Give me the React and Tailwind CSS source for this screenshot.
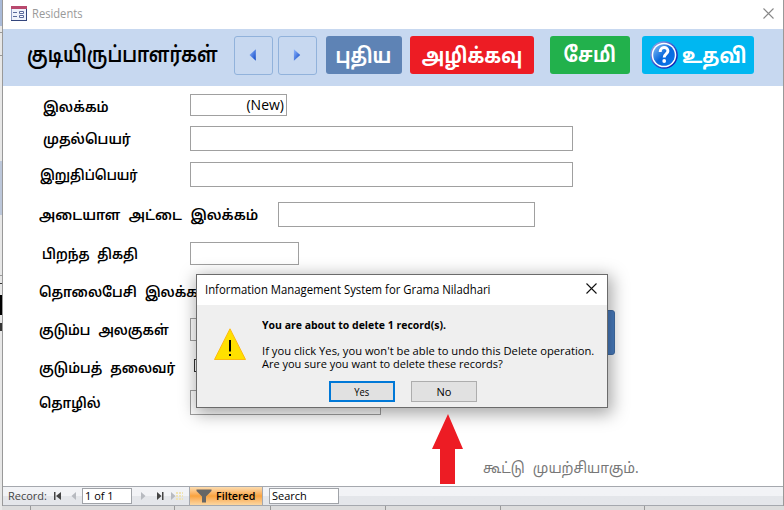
const UI = "font-['Open_Sans','Noto_Sans',sans-serif]";

function T({ children, className = "", origin = "origin-left" }) {
  return <span className={`block shrink-0 whitespace-nowrap ${origin} ${className}`}>{children}</span>;
}

function Row({ label, labelClass = "", textClass = "scale-x-[0.95]", className = "", children }) {
  return (
    <div className={`flex items-center ${className}`}>
      <div className={`shrink-0 pt-[5px] ${labelClass}`}>
        <T className={`text-[14px] font-semibold leading-5 [word-spacing:5px] ${textClass}`}>{label}</T>
      </div>
      {children}
    </div>
  );
}

function Field({ className = "", children }) {
  return <div className={`h-full shrink-0 border border-[#a0a0a0] bg-white ${className}`}>{children}</div>;
}

function NavButton({ flip }) {
  return (
    <div className="flex h-[39px] w-[39px] shrink-0 items-center justify-center rounded-[3px] border border-[#91b2db] pb-px pr-[2px]">
      <svg width="8" height="12" viewBox="0 0 8 12">
        <defs>
          <linearGradient id="nav" x1="0" y1="0" x2="1" y2="1">
            <stop offset="0" stopColor="#8fb6ff" />
            <stop offset="1" stopColor="#0b45c4" />
          </linearGradient>
        </defs>
        <path d={flip ? "M7.2 6 0.9 0.3V11.7Z" : "M0.5 6 6.8 0.3V11.7Z"} fill="url(#nav)" />
      </svg>
    </div>
  );
}

function HelpIcon() {
  return (
    <svg width="28" height="28" viewBox="0 0 28 28" className="shrink-0">
      <defs>
        <linearGradient id="ring" x1="0" y1="0" x2="1" y2="1">
          <stop offset="0" stopColor="#a9b4e6" />
          <stop offset="0.5" stopColor="#3a55cf" />
          <stop offset="1" stopColor="#000aa8" />
        </linearGradient>
        <linearGradient id="disc" x1="0" y1="0" x2="1" y2="1">
          <stop offset="0" stopColor="#8cc4f8" />
          <stop offset="0.5" stopColor="#0868dc" />
          <stop offset="1" stopColor="#0878ee" />
        </linearGradient>
      </defs>
      <circle cx="14" cy="14" r="13.8" fill="url(#ring)" />
      <circle cx="14" cy="14" r="12.3" fill="#fff" />
      <circle cx="14" cy="14" r="10.8" fill="url(#disc)" />
      <path d="M10.2 11C10 5.200 18 5.400 17.900 10C17.800 13.200 14.200 12.600 14.200 16.600" fill="none" stroke="#fff" strokeWidth="3" />
      <circle cx="14.2" cy="20" r="1.9" fill="#fff" />
    </svg>
  );
}

function FormIcon() {
  return (
    <svg width="16" height="15" viewBox="0 0 16 15" className="shrink-0">
      <rect x="0.5" y="0.5" width="15" height="14" fill="#eef2fb" stroke="#8e9cc4" />
      <path d="M0 0H16V3H0Z" fill="#b9496e" />
      <path d="M2 6.5H6M2 10.5H6" stroke="#5a6a9c" />
      <path d="M8.5 5.5H12.5V7.5H8.5ZM8.5 9.5H12.5V11.5H8.5Z" fill="#fff" stroke="#5a6a9c" />
      <path d="M0 14.5H16M15.5 3V15" stroke="#33457c" />
    </svg>
  );
}

function Behind() {
  return (
    <div className="h-[510px] w-[2px] shrink-0 overflow-hidden bg-[#e7e7e7]">
      <div className="h-[26px] bg-[#a9bad8]" />
      <div className="mt-[6px] h-px bg-[#999]" />
      <div className="mt-[22px] h-px bg-[#999]" />
      <div className="mt-[105px] h-[54px] bg-[#bcc7da]" />
      <div className="mt-[60px] h-px bg-[#999]" />
      <div className="mt-[7px] h-px bg-[#333]" />
      <div className="mt-[11px] h-[20px] bg-black" />
      <div className="mt-[8px] h-[8px] bg-[#333]" />
    </div>
  );
}

function Dialog() {
  return (
    <div className={`absolute left-[196px] top-[274px] flex h-[134px] w-[412px] flex-col border border-[#6b6b6b] bg-[#efefef] text-black shadow-[2px_4px_16px_2px_rgba(0,0,0,0.35)] ${UI}`}>
      <div className="flex h-[30px] shrink-0 items-center justify-between bg-white pl-[8px] pr-[10px]">
        <T className="scale-x-[0.945] text-[12px] leading-4">Information Management System for Grama Niladhari</T>
        <svg width="11" height="11" viewBox="0 0 11 11" className="-mt-[3px]">
          <path d="M0.5 0.5 10.5 10.5M10.5 0.5 0.5 10.5" stroke="#111" strokeWidth="1.1" />
        </svg>
      </div>
      <div className="flex pt-[13px]">
        <svg width="32" height="32" viewBox="0 0 32 32" className="ml-[17px] mt-[10px] shrink-0">
          <path d="M16 0.8 31.5 31.5H0.5Z" fill="#ffe000" stroke="#fdb913" />
          <path d="M16 12V23.5M16 26V28" stroke="#000" strokeWidth="2" />
        </svg>
        <div className="ml-[16px] flex flex-col text-[11px] leading-[13px]">
          <T className="scale-x-[0.953] font-bold">You are about to delete 1 record(s).</T>
          <T className="mt-[13px] scale-x-[1.018]">If you click Yes, you won't be able to undo this Delete operation.</T>
          <T>Are you sure you want to delete these records?</T>
        </div>
      </div>
      <div className="ml-[132px] mt-[11px] flex gap-[16px] text-[11px]">
        <div className="flex h-[21px] w-[66px] items-center justify-center border-2 border-[#0078d7] bg-[#e1e1e1] pt-px"><T origin="origin-center" className="scale-x-[0.85]">Yes</T></div>
        <div className="flex h-[21px] w-[66px] items-center justify-center border border-[#adadad] bg-[#e1e1e1] pt-px">No</div>
      </div>
    </div>
  );
}

function StatusBar() {
  return (
    <div className={`flex h-[20px] shrink-0 items-center border-y border-[#a5a8ae] bg-linear-to-b from-[#f2f3f6] from-50% to-[#e4e6ea] to-50% text-[11px] ${UI}`}>
      <div className="w-[46px] pl-[5px] text-[#444]">
        <T>Record:</T>
      </div>
      <svg width="30" height="12" viewBox="0 0 30 12" className="ml-[3px] shrink-0">
        <path d="M2 2H3.5V10H2ZM9 2V10L4 6Z" fill="#444" />
        <path d="M24 2V10L19.5 6Z" fill="#b7bac0" />
      </svg>
      <div className="flex h-[16px] w-[50px] items-center border border-[#a0a3a8] bg-white pl-[2px] text-black">
        <T>1 of 1</T>
      </div>
      <svg width="53" height="12" viewBox="0 0 53 12" className="ml-[4px] shrink-0">
        <path d="M5 2V10L9.5 6Z" fill="#b7bac0" />
        <path d="M21 2V10L25.5 6ZM26 2H27.5V10H26Z" fill="#444" />
        <path d="M35 2V10L39.5 6Z" fill="#b7bac0" />
        <path d="M40 3H47M40 6H47M40 9H47" stroke="#f0e3b4" strokeWidth="2" strokeDasharray="2 1" />
      </svg>
      <div className="flex h-full w-[74px] items-center border-x border-[#a5a8ae] bg-linear-to-b from-[#fcdcae] via-[#f9a33d] to-[#fbd6a0] pl-[6px] text-black">
        <svg width="16" height="14" viewBox="0 0 16 14" className="mr-[4px] shrink-0">
          <path d="M0.5 0.5H15.5V2L10 7.5V13.5H6V7.5L0.5 2Z" fill="#666" />
        </svg>
        <T className="font-semibold scale-x-[0.97]">Filtered</T>
      </div>
      <div className="ml-[6px] flex h-[16px] w-[70px] items-center border border-[#a0a3a8] bg-white pl-[2px] text-black">
        <T>Search</T>
      </div>
    </div>
  );
}

export default function App() {
  return (
    <div className="relative flex h-[510px] w-[784px] overflow-hidden bg-[#e7e7e7] font-['Noto_Sans_Tamil','Noto_Sans',sans-serif] text-black">
      <Behind />
      <div className="flex h-[510px] w-[782px] flex-col">
        <div className="flex h-[506px] flex-col border-x border-[#999] bg-white">
          <div className="flex h-[29px] shrink-0 items-center pl-[8px] pr-[9px]">
            <div className="-mt-[3px]"><FormIcon /></div>
            <T className={`-mt-px ml-[5px] scale-x-[0.93] text-[12px] text-[#999] ${UI}`}>Residents</T>
            <svg width="11" height="11" viewBox="0 0 11 11" className="-mt-[3px] ml-auto">
              <path d="M0.5 0.5 10.5 10.5M10.5 0.5 0.5 10.5" stroke="#888" strokeWidth="1.1" />
            </svg>
          </div>
          <div className="flex h-[57px] shrink-0 items-start bg-[#c7d8f0] pt-[7px] text-white">
            <div className="flex h-[38px] w-[231px] shrink-0 items-center pl-[24px] pt-[2px] text-black">
              <T className="scale-x-[0.83] text-[22px] font-semibold">குடியிருப்பாளர்கள்</T>
            </div>
            <NavButton />
            <div className="ml-[5px]"><NavButton flip /></div>
            <div className="ml-[9px] flex h-[38px] w-[76px] items-center justify-center rounded-[3px] bg-[#5e83b5] pr-[2px] pt-[7px]">
              <T origin="origin-center" className="scale-x-[0.86] text-[21px] font-bold">புதிய</T>
            </div>
            <div className="ml-[8px] flex h-[38px] w-[124px] items-center justify-center rounded-[3px] bg-[#ed1c24] pt-[7px]">
              <T origin="origin-center" className="scale-x-[0.88] text-[21px] font-bold">அழிக்கவு</T>
            </div>
            <div className="ml-[16px] flex h-[38px] w-[80px] items-center justify-center rounded-[3px] bg-[#22b14c] pt-[6px]">
              <T origin="origin-center" className="scale-x-[0.88] text-[21px] font-bold">சேமி</T>
            </div>
            <div className="ml-[12px] flex h-[38px] w-[112px] items-center rounded-[3px] bg-[#00b7f1] pl-[8px]">
              <HelpIcon />
              <T className="ml-[4px] mt-[8px] scale-x-[0.89] text-[21px] font-bold">உதவி</T>
            </div>
          </div>
          <div className="h-[400px] shrink-0 overflow-hidden">
            <Row label="இலக்கம்" className="mt-[8px] h-[22px]" labelClass="w-[187px] pl-[40px] pt-[7px]">
              <Field className={`flex w-[97px] items-center justify-end pr-[2px] text-[14px] leading-5 ${UI}`}><T>(New)</T></Field>
            </Row>
            <Row label="முதல்பெயர்" className="mt-[10px] h-[25px]" labelClass="w-[187px] pl-[40px]">
              <Field className="w-[383px]" />
            </Row>
            <Row label="இறுதிப்பெயர்" textClass="scale-x-[0.89]" className="mt-[11px] h-[25px]" labelClass="w-[187px] pl-[37px]">
              <Field className="w-[383px]" />
            </Row>
            <Row label="அடையாள அட்டை இலக்கம்" textClass="scale-x-[0.98]" className="mt-[15px] h-[25px]" labelClass="w-[275px] pl-[36px]">
              <Field className="w-[257px]" />
            </Row>
            <Row label="பிறந்த திகதி" textClass="scale-x-[0.9]" className="mt-[15px] h-[23px]" labelClass="w-[187px] pl-[39px]">
              <Field className="w-[109px]" />
            </Row>
            <Row label="தொலைபேசி இலக்கம்" textClass="scale-x-[0.94]" className="mt-[14px] h-[24px]" labelClass="w-[275px] pl-[36px]" />
            <Row label="குடும்ப அலகுகள்" textClass="scale-x-[0.93]" className="mt-[15px] h-[23px]" labelClass="w-[187px] pl-[36px]">
              <Field className="w-[109px]" />
            </Row>
            <Row label="குடும்பத் தலைவர்" textClass="scale-x-[0.935]" className="mt-[14px] h-[24px]" labelClass="w-[191px] pl-[36px]">
              <div className="-mt-[4px] h-[13px] w-[13px] border border-[#333]" />
            </Row>
            <Row label="தொழில்" textClass="scale-x-[0.92]" className="mt-[11px] h-[25px]" labelClass="w-[187px] pl-[36px]">
              <Field className="w-[191px]" />
            </Row>
            <div className="mt-[43px] pl-[480px] text-[#777]">
              <T className="scale-x-[0.915] text-[15px] leading-6 [word-spacing:5px]">கூட்டு முயற்சியாகும்.</T>
            </div>
          </div>
          <StatusBar />
        </div>
        <div className="flex h-[4px] bg-[#dcdcdc]">
          <div className="w-[29px] border-r border-[#999]" />
          <div className="w-[144px] border-r border-[#999]" />
          <div className="w-[96px] border-r border-[#999]" />
          <div className="w-[115px] border-r border-[#999]" />
          <div className="w-[115px] border-r border-[#999]" />
          <div className="w-[144px] border-r border-[#999]" />
        </div>
      </div>
      <div className="absolute left-[575px] top-[310px] h-[45px] w-[40px] rounded-[3px] border border-[#426fa8] bg-[#4b7fc4]" />
      <Dialog />
      <svg width="32" height="70" viewBox="0 0 32 70" className="absolute left-[432px] top-[414px]">
        <path d="M16 0 31 35H23V70H8V35H0Z" fill="#ed1c24" />
      </svg>
    </div>
  );
}
